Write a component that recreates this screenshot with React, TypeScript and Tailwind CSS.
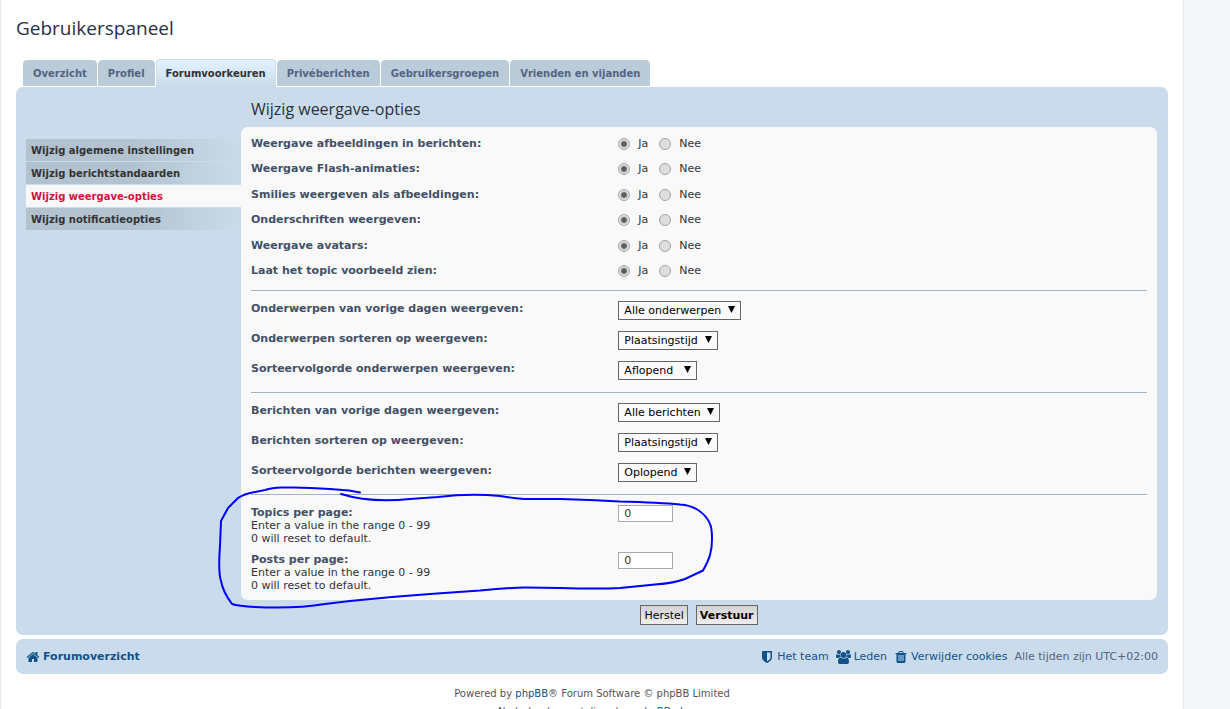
import React, { useState } from 'react';
import clsx from 'clsx';

const ICONS = {
  home: {
    viewBox: '0 0 1792 1792',
    d: 'M1472 992v480q0 26-19 45t-45 19h-384v-384h-256v384h-384q-26 0-45-19t-19-45v-480q0-1 .5-3t.5-3l575-474 575 474q1 2 1 6zm223-69l-62 74q-8 9-21 11h-3q-13 0-21-7l-692-577-692 577q-12 8-24 7-13-2-21-11l-62-74q-8-10-7-23.5t11-21.5l719-599q32-26 76-26t76 26l244 204v-195q0-14 9-23t23-9h192q14 0 23 9t9 23v408l219 182q10 8 11 21.5t-7 23.5z',
  },
  shield: {
    viewBox: '0 0 1792 1792',
    d: 'M1344 960v-640h-448v1137q119-63 213-137 235-184 235-360zm192-768v768q0 86-33.5 170.5t-83 150-118 127.5-126.5 103-121 77.5-89.5 49.5-42.5 20q-12 6-26 6t-26-6q-16-7-42.5-20t-89.5-49.5-121-77.5-126.5-103-118-127.5-83-150-33.5-170.5v-768q0-26 19-45t45-19h1152q26 0 45 19t19 45z',
  },
  group: {
    viewBox: '64 0 1920 1792',
    d: 'M657 896q-162 5-265 128h-134q-82 0-138-40.5t-56-118.5q0-353 124-353 6 0 43.5 21t97.5 42.5 119 21.5q67 0 133-23-5 37-5 66 0 139 81 256zm1071 637q0 120-73 189.5t-194 69.5h-874q-121 0-194-69.5t-73-189.5q0-53 3.5-103.5t14-109 26.5-108.5 43-97.5 62-81 85.5-53.5 111.5-20q10 0 43 21.5t73 48 107 48 135 21.5 135-21.5 107-48 73-48 43-21.5q61 0 111.5 20t85.5 53.5 62 81 43 97.5 26.5 108.5 14 109 3.5 103.5zm-1024-1277q0 106-75 181t-181 75-181-75-75-181 75-181 181-75 181 75 75 181zm704 384q0 159-112.5 271.5t-271.5 112.5-271.5-112.5-112.5-271.5 112.5-271.5 271.5-112.5 271.5 112.5 112.5 271.5zm576 225q0 78-56 118.5t-138 40.5h-134q-103-123-265-128 81-117 81-256 0-29-5-66 66 23 133 23 59 0 119-21.5t97.5-42.5 43.5-21q124 0 124 353zm-128-609q0 106-75 181t-181 75-181-75-75-181 75-181 181-75 181 75 75 181z',
  },
  trash: {
    viewBox: '0 0 1792 1792',
    d: 'M704 1376v-704q0-14-9-23t-23-9h-64q-14 0-23 9t-9 23v704q0 14 9 23t23 9h64q14 0 23-9t9-23zm256 0v-704q0-14-9-23t-23-9h-64q-14 0-23 9t-9 23v704q0 14 9 23t23 9h64q14 0 23-9t9-23zm256 0v-704q0-14-9-23t-23-9h-64q-14 0-23 9t-9 23v704q0 14 9 23t23 9h64q14 0 23-9t9-23zm-544-992h448l-48-117q-7-9-17-11h-317q-10 2-17 11zm928 32v64q0 14-9 23t-23 9h-96v948q0 83-47 143.5t-113 60.5h-832q-66 0-113-58.5t-47-141.5v-952h-96q-14 0-23-9t-9-23v-64q0-14 9-23t23-9h309l70-167q15-37 54-63t79-26h320q40 0 79 26t54 63l70 167h309q14 0 23 9t9 23z',
  },
};

function Icon({ name, className }: { name: keyof typeof ICONS; className?: string }) {
  return (
    <svg viewBox={ICONS[name].viewBox} className={clsx('shrink-0 fill-current', className)} aria-hidden="true">
      <path d={ICONS[name].d} />
    </svg>
  );
}

const tabs = ['Overzicht', 'Profiel', 'Forumvoorkeuren', 'Privéberichten', 'Gebruikersgroepen', 'Vrienden en vijanden'];

const menuItems = [
  'Wijzig algemene instellingen',
  'Wijzig berichtstandaarden',
  'Wijzig weergave-opties',
  'Wijzig notificatieopties',
];

const radioOptions = [
  { name: 'images', label: 'Weergave afbeeldingen in berichten:' },
  { name: 'flash', label: 'Weergave Flash-animaties:' },
  { name: 'smilies', label: 'Smilies weergeven als afbeeldingen:' },
  { name: 'sigs', label: 'Onderschriften weergeven:' },
  { name: 'avatars', label: 'Weergave avatars:' },
  { name: 'preview', label: 'Laat het topic voorbeeld zien:' },
];

const topicSelects = [
  { name: 'topic_st', label: 'Onderwerpen van vorige dagen weergeven:', value: 'Alle onderwerpen', width: 'w-[123px]' },
  { name: 'topic_sk', label: 'Onderwerpen sorteren op weergeven:', value: 'Plaatsingstijd', width: 'w-[100px]' },
  { name: 'topic_sd', label: 'Sorteervolgorde onderwerpen weergeven:', value: 'Aflopend', width: 'w-[79px]' },
];

const postSelects = [
  { name: 'post_st', label: 'Berichten van vorige dagen weergeven:', value: 'Alle berichten', width: 'w-[102px]' },
  { name: 'post_sk', label: 'Berichten sorteren op weergeven:', value: 'Plaatsingstijd', width: 'w-[100px]' },
  { name: 'post_sd', label: 'Sorteervolgorde berichten weergeven:', value: 'Oplopend', width: 'w-[79px]' },
];

interface SelectOption {
  name: string;
  label: string;
  value: string;
  width: string;
}

function RadioRow({ name, label }: { name: string; label: string }) {
  const [value, setValue] = useState('Ja');

  return (
    <div role="radiogroup" aria-label={label} className="grid grid-cols-[41%_1fr] items-start odd:h-[25px] even:h-[26px]">
      <span className="font-bold text-[#425067]">{label}</span>
      <div className="flex gap-[11px]">
        {['Ja', 'Nee'].map((option) => (
          <label key={option} className="flex items-center gap-2 text-[#333]">
            <input
              type="radio"
              name={name}
              checked={value === option}
              onChange={() => setValue(option)}
              className="size-3 appearance-none rounded-full border border-[#a3a3a3] bg-[#dedede] checked:bg-[radial-gradient(circle,#5c5c5c_0,#5c5c5c_2px,#e6e6e6_4px)]"
            />
            {option}
          </label>
        ))}
      </div>
    </div>
  );
}

function SelectRow({ name, label, value, width }: SelectOption) {
  return (
    <div className="grid grid-cols-[41%_1fr] items-start">
      <label htmlFor={name} className="pt-px font-bold text-[#425067]">{label}</label>
      <div className="flex">
        <div className={clsx('relative', width)}>
          <select
            id={name}
            name={name}
            className="block h-[19px] w-full appearance-none border border-[#666] bg-[#fafafa] pl-[5px] leading-4 text-black"
          >
            <option>{value}</option>
          </select>
          <svg viewBox="0 0 7 7" className="pointer-events-none absolute top-[5px] right-[6px] size-[7px]" aria-hidden="true">
            <path d="M0 0h7L3.5 7z" />
          </svg>
        </div>
      </div>
    </div>
  );
}

function NumberRow({ name, label }: { name: string; label: string }) {
  const [value, setValue] = useState('0');

  return (
    <div className="grid grid-cols-[41%_1fr] items-start text-[#333]">
      <div className="pt-px">
        <label htmlFor={name} className="block font-bold text-[#425067]">{label}</label>
        <p>Enter a value in the range 0 - 99</p>
        <p>0 will reset to default.</p>
      </div>
      <input
        id={name}
        name={name}
        type="text"
        value={value}
        onChange={(e) => setValue(e.target.value)}
        className="h-[17px] w-[55px] border border-[#a9a9a9] bg-white px-[5px] text-[#333]"
      />
    </div>
  );
}

// Hand-drawn pen stroke around the per-page fields
function PenStroke() {
  return (
    <svg
      viewBox="210 480 510 135"
      className="pointer-events-none absolute top-[480px] left-[209px] h-[135px] w-[510px] fill-none stroke-[#0000ff] stroke-2"
      strokeLinecap="round"
      strokeLinejoin="round"
      aria-hidden="true"
    >
      <path d="M360 492.5L349 490.5L330 489Q305 487 285 487.5Q273 487 265 490L250 493Q239 496 236 500L228 508L221 521L220 546Q218 572 221 581Q223 592 232 604Q238 606 255 607Q295 609 325 604L350 601L392 597L430 594L480 590.5Q510 587.5 525 587.5L560 588Q600 589 620 588L655 584.5Q675 583 685 579L703 570.5Q708 562 710 555Q712 548 712 539Q712 528 710 524Q707 516 698 510Q690 505 680 504.5Q660 502.5 620 501.5L590 500L560 499H524Q512 498 500 496Q470 493 438 497L410 499Q370 503 341 494" />
    </svg>
  );
}

export default function App() {
  const [activeTab, setActiveTab] = useState('Forumvoorkeuren');

  return (
    <div className="min-h-screen bg-[#f5f7fa] pr-[46px] font-['DejaVu_Sans',Verdana,sans-serif] text-[11px] leading-[13px]">
      <div className="relative min-h-screen border-x border-[#e6e9ed] bg-white px-[15px]">
        <h1 className="pt-4 font-['Trebuchet_MS','Open_Sans',sans-serif] text-[19px] leading-6 text-[#28313f]">
          Gebruikerspaneel
        </h1>

        <nav className="mt-[19px] ml-[7px] flex h-7 items-start gap-px text-[10px] font-bold">
          {tabs.map((tab) => (
            <button
              key={tab}
              type="button"
              onClick={() => setActiveTab(tab)}
              className={clsx(
                'rounded-t px-[9px]',
                tab === activeTab
                  ? 'h-7 border border-b-0 border-[#cadceb] bg-linear-to-b from-[#e2f2ff] to-[#cadceb] text-[#333]'
                  : 'mt-px h-[26px] border border-[#bacbd9] bg-[#bacbd9] text-[#536482]'
              )}
            >
              {tab}
            </button>
          ))}
        </nav>

        <main className="flex rounded-[7px] bg-[#cadceb] pr-[11px] pb-[10px] pl-[10px]">
          <nav className="flex w-[215px] shrink-0 flex-col gap-px pt-[52px] text-[10px] font-bold">
            {menuItems.map((item) => (
              <a
                key={item}
                href="#"
                className={clsx(
                  'px-[5px] pt-[5px] pb-[3px] leading-[14px]',
                  item === 'Wijzig weergave-opties'
                    ? 'bg-[#f9f9f9] text-[#d31141]'
                    : 'bg-linear-to-r from-[#b2c2cf] from-50% to-[#cadceb] text-[#333]'
                )}
              >
                {item}
              </a>
            ))}
          </nav>

          <form className="min-w-0 flex-1" onSubmit={(e) => e.preventDefault()}>
            <h2 className="px-[10px] pt-3 pb-2 font-['Trebuchet_MS','Open_Sans',sans-serif] text-base leading-5 text-[#28313f]">
              Wijzig weergave-opties
            </h2>
            <div className="rounded-[7px] bg-[#f9f9f9] px-[10px] pt-[10px] pb-2">
              <fieldset>
                {radioOptions.map((option) => (
                  <RadioRow key={option.name} {...option} />
                ))}
              </fieldset>
              {[topicSelects, postSelects].map((group) => (
                <fieldset key={group[0].name} className="grid gap-[11px] border-t border-[#a4b3bf] pt-[10px] pb-3">
                  {group.map((option) => (
                    <SelectRow key={option.name} {...option} />
                  ))}
                </fieldset>
              ))}
              <fieldset className="grid gap-[7px] border-t border-[#a4b3bf] pt-[10px]">
                <NumberRow name="topics_per_page" label="Topics per page:" />
                <NumberRow name="posts_per_page" label="Posts per page:" />
              </fieldset>
            </div>
            <div className="flex justify-center gap-2 pt-[5px]">
              <button
                type="reset"
                className="h-5 border border-[#666] bg-linear-to-b from-[#d2d2d2] to-[#efefef] px-[3px] text-black"
              >
                Herstel
              </button>
              <button
                type="submit"
                className="h-5 border border-[#666] bg-linear-to-b from-[#d2d2d2] to-[#efefef] px-[3px] font-bold text-black"
              >
                Verstuur
              </button>
            </div>
          </form>
        </main>

        <div className="mt-1 flex h-[35px] items-center justify-between rounded-[7px] bg-[#cadceb] px-[10px] text-[#105289]">
          <a href="#" className="flex items-center gap-[3px] font-bold">
            <Icon name="home" className="size-[14px]" />
            Forumoverzicht
          </a>
          <div className="flex items-center gap-[7px]">
            <a href="#" className="flex items-center gap-[3px]">
              <Icon name="shield" className="size-[14px]" />
              Het team
            </a>
            <a href="#" className="flex items-center gap-[3px]">
              <Icon name="group" className="h-[14px] w-[15px]" />
              Leden
            </a>
            <a href="#" className="flex items-center gap-[3px]">
              <Icon name="trash" className="size-[14px]" />
              Verwijder cookies
            </a>
            <span className="text-[#536482]">Alle tijden zijn UTC+02:00</span>
          </div>
        </div>

        <footer className="pt-[11px] text-center text-[10px] leading-[18px] text-[#555]">
          <p>
            Powered by <a href="#" className="text-[#105289]">phpBB</a>® Forum Software © phpBB Limited
          </p>
          <p>
            Nederlandse vertaling door <a href="#" className="text-[#105289]">phpBB.nl</a>.
          </p>
        </footer>

        <PenStroke />
      </div>
    </div>
  );
}
